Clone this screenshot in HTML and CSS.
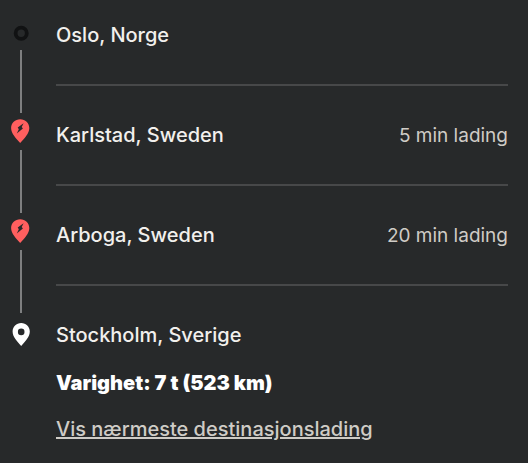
FILE: index.html
```html
<!DOCTYPE html>
<html lang="no">
  <head>
    <meta charset="utf-8">
    <meta name="viewport" content="width=device-width, initial-scale=1">
    <title>Oslo - Stockholm</title>
    <link rel="stylesheet" href="styles.css">
  </head>
  <body>
    <ol class="route">
      <li class="stop">
        <div class="marker">
          <svg class="icon" viewBox="0 0 42 37" aria-hidden="true">
            <circle cx="21.2" cy="20.3" r="5.6" fill="none" stroke="#111213" stroke-width="3.8"/>
          </svg>
        </div>
        <div class="details">
          <span class="place">Oslo, Norge</span>
        </div>
      </li>
      <li class="stop">
        <div class="marker">
          <svg class="icon" viewBox="0 0 42 37" aria-hidden="true">
            <path d="M20.2 6.2c-5.1 0-9.1 3.9-9.1 8.8 0 5.6 4.9 10.2 9.1 15.1 4.2-4.9 9.1-9.5 9.1-15.1 0-4.9-4-8.8-9.1-8.8z" fill="#ff5f5f"/>
            <path d="M23.6 10.2L17.7 14.6l1.1 1.6-2 4.2 6.1-4.8-1.2-1.6z" fill="#27292a"/>
          </svg>
        </div>
        <div class="details">
          <span class="place">Karlstad, Sweden</span>
          <span class="charge">5 min lading</span>
        </div>
      </li>
      <li class="stop">
        <div class="marker">
          <svg class="icon" viewBox="0 0 42 37" aria-hidden="true">
            <path d="M20.2 6.2c-5.1 0-9.1 3.9-9.1 8.8 0 5.6 4.9 10.2 9.1 15.1 4.2-4.9 9.1-9.5 9.1-15.1 0-4.9-4-8.8-9.1-8.8z" fill="#ff5f5f"/>
            <path d="M23.6 10.2L17.7 14.6l1.1 1.6-2 4.2 6.1-4.8-1.2-1.6z" fill="#27292a"/>
          </svg>
        </div>
        <div class="details">
          <span class="place">Arboga, Sweden</span>
          <span class="charge">20 min lading</span>
        </div>
      </li>
      <li class="stop">
        <div class="marker">
          <svg class="icon" viewBox="0 0 42 37" aria-hidden="true">
            <path d="M21.2 10c-4.9 0-8.6 3.8-8.6 8.6 0 5.4 4.6 9.8 8.6 14.5 4-4.7 8.6-9.1 8.6-14.5 0-4.8-3.7-8.6-8.6-8.6zm0 5.6a3.3 3.3 0 1 1 0 6.6 3.3 3.3 0 0 1 0-6.6z" fill="#fff"/>
          </svg>
        </div>
        <div class="summary">
          <span class="place">Stockholm, Sverige</span>
          <strong class="duration">Varighet: 7 t (523 km)</strong>
          <a class="link" href="#">Vis nærmeste destinasjonslading</a>
        </div>
      </li>
    </ol>
  </body>
</html>
```

FILE: styles.css
```css
body {
  margin: 0;
  background-color: #27292a;
  color: #f2f0ed;
  font-family: Inter, "Liberation Sans", sans-serif;
  font-size: 20px;
  font-weight: 500;
  line-height: 28px;
}

.route {
  margin: 0;
  padding: 13px 20px 0 0;
  list-style: none;
}

.stop {
  display: flex;
}

.marker {
  display: flex;
  flex-direction: column;
  align-items: center;
  width: 42px;
  margin-right: 14px;
}

.icon {
  width: 42px;
  height: 37px;
}

/* line down to the next stop */
.stop:not(:last-child) .marker::after {
  content: "";
  flex: 1;
  width: 2px;
  background-color: #7e7f80;
}

.details {
  display: flex;
  flex: 1;
  align-items: baseline;
  justify-content: space-between;
  min-height: 63px;
  margin-bottom: 27px;
  padding-top: 8px;
  border-bottom: 2px solid #474849;
}

.charge {
  color: #cfccc6;
  font-size: 19px;
  font-weight: 400;
}

.summary {
  display: flex;
  flex: 1;
  flex-direction: column;
  align-items: flex-start;
  padding-top: 8px;
}

.duration {
  margin: 20px 0 18px;
  color: #fff;
  font-weight: 900;
}

.link {
  color: #cfccc6;
  text-decoration: underline;
}
```
